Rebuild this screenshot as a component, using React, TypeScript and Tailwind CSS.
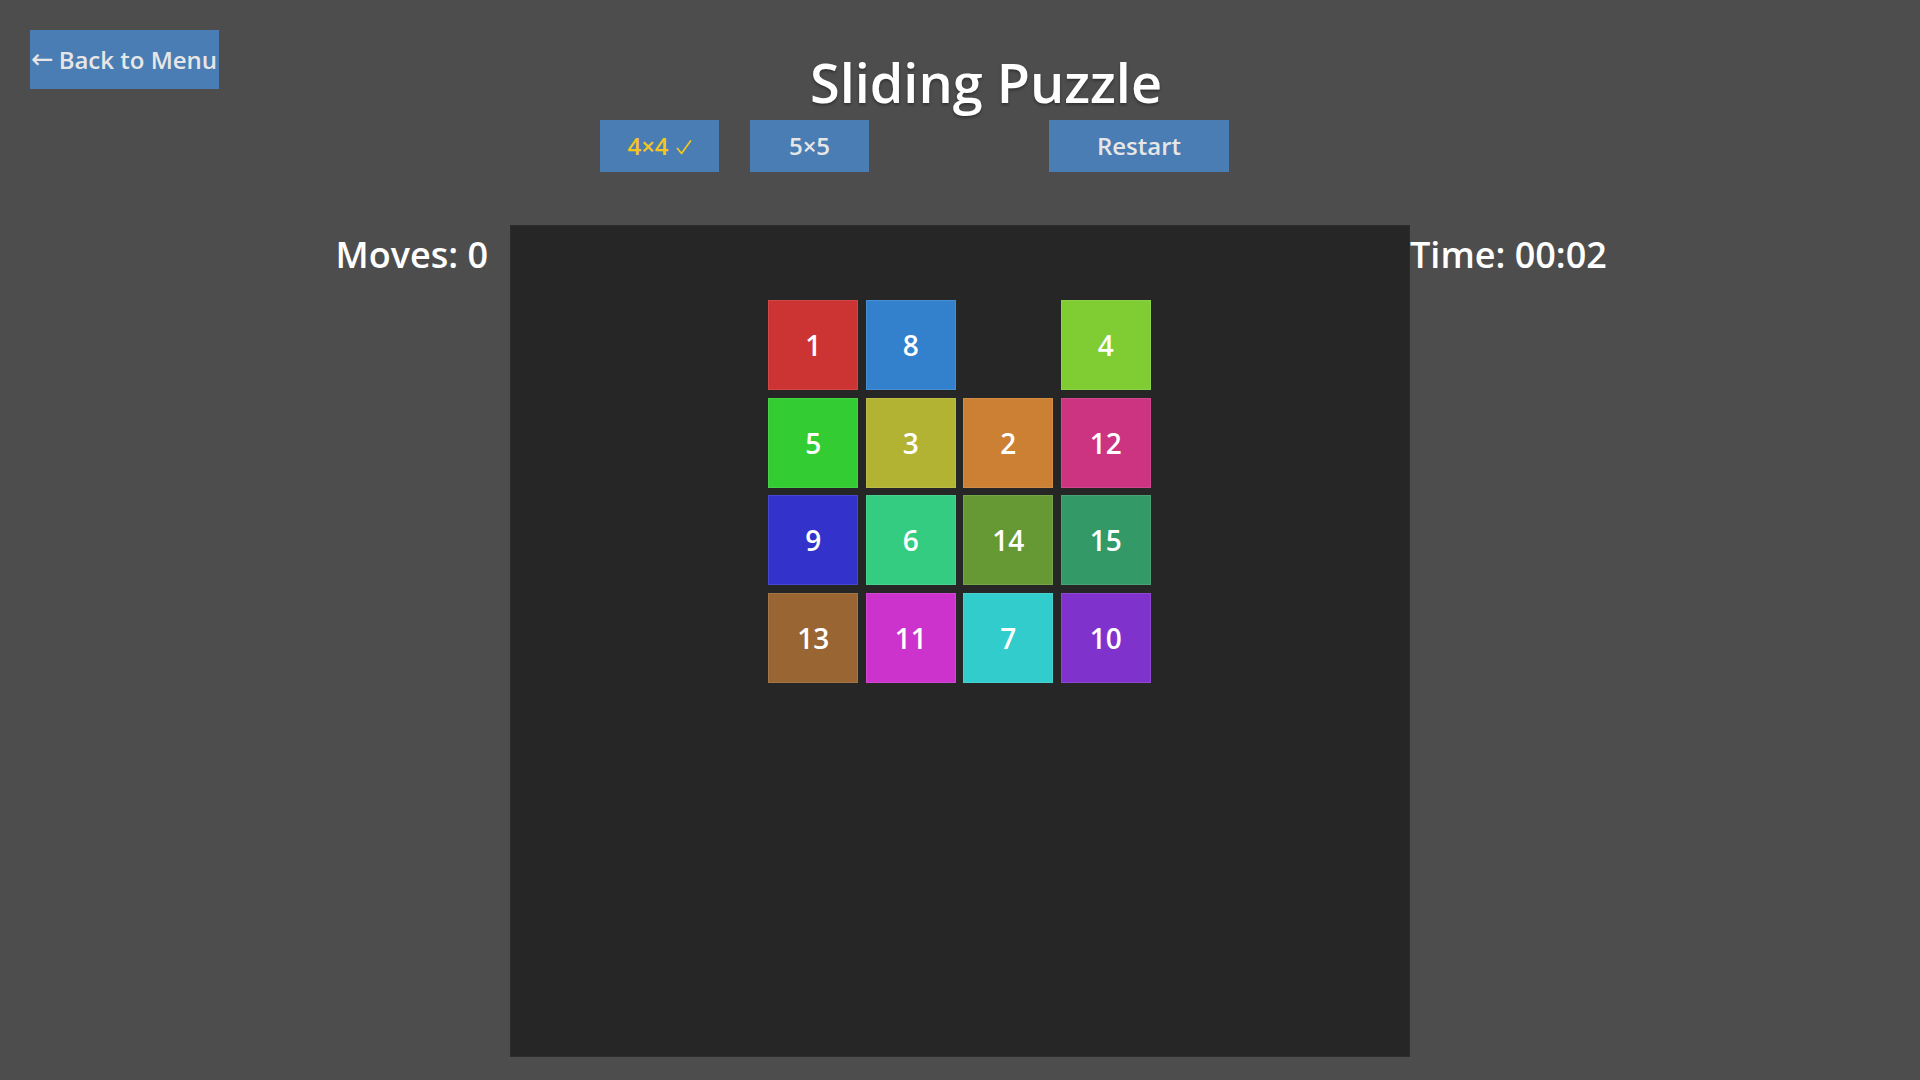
import React from "react";

const tiles: (null | { n: number; c: string })[] = [
  { n: 1, c: "bg-[#cc3333]" },
  { n: 8, c: "bg-[#3380cc]" },
  null,
  { n: 4, c: "bg-[#80cc33]" },
  { n: 5, c: "bg-[#33cc33]" },
  { n: 3, c: "bg-[#b3b333]" },
  { n: 2, c: "bg-[#cc8033]" },
  { n: 12, c: "bg-[#cc3380]" },
  { n: 9, c: "bg-[#3333cc]" },
  { n: 6, c: "bg-[#33cc80]" },
  { n: 14, c: "bg-[#669933]" },
  { n: 15, c: "bg-[#339966]" },
  { n: 13, c: "bg-[#996633]" },
  { n: 11, c: "bg-[#cc33cc]" },
  { n: 7, c: "bg-[#33cccc]" },
  { n: 10, c: "bg-[#8033cc]" },
];

export default function App() {
  return (
    <div className="w-[1920px] h-[1080px] overflow-hidden bg-[#4d4d4d] font-['Open_Sans',sans-serif] font-semibold">
      <div className="grid">
        <div className="col-start-1 row-start-1 pl-[30px] pt-[30px]">
          <button className="w-[189px] h-[59px] bg-[#4a7db4] text-[#e6e6e6] text-[24px] leading-none flex items-center justify-start pl-[1px] whitespace-nowrap">
            <span className="font-['DejaVu_Sans',sans-serif] font-normal text-[27px] mr-[5px] -mt-[3px]">←</span>
            Back to Menu
          </button>
        </div>
        <div className="col-start-1 row-start-1 flex flex-col">
          <div className="flex justify-center pl-[52px] pt-[55px]">
            <h1 className="text-[54px] leading-none text-white [text-shadow:0_2px_3px_rgba(0,0,0,0.35)]">
              Sliding Puzzle
            </h1>
          </div>
          <div className="flex pl-[600px] mt-[11px]">
            <button className="w-[119px] h-[52px] bg-[#4a7db4] text-[#f5c61f] text-[24px] leading-none flex items-center justify-center">
              4×4
              <svg className="ml-[7px] mt-[2px]" width="16" height="15" viewBox="0 0 16 15" fill="none">
                <path d="M1.5 8.5 L5.5 13.5 L14.5 1" stroke="#f5c61f" strokeWidth="1.7" strokeLinecap="round" strokeLinejoin="round" />
              </svg>
            </button>
            <button className="ml-[31px] w-[119px] h-[52px] bg-[#4a7db4] text-[#e6e6e6] text-[24px] leading-none flex items-center justify-center">
              5×5
            </button>
            <button className="ml-[180px] w-[180px] h-[52px] bg-[#4a7db4] text-[#e6e6e6] text-[24px] leading-none flex items-center justify-center">
              Restart
            </button>
          </div>
        </div>
      </div>

      <div className="flex items-start mt-[53px]">
        <div className="w-[510px] flex justify-end pr-[22px] pt-[12px]">
          <span className="text-[36px] leading-none text-white whitespace-nowrap">Moves: 0</span>
        </div>
        <div className="w-[900px] h-[832px] bg-[#262626] border border-[#2c2c2c] flex justify-center pt-[74px] pr-[1px]">
          <div className="grid grid-cols-[repeat(4,90px)] auto-rows-[90px] gap-[7.5px] h-fit">
            {tiles.map((t, i) =>
              t ? (
                <div
                  key={i}
                  className={`${t.c} flex items-center justify-center text-white text-[28px] leading-none border border-white/10`}
                >
                  {t.n}
                </div>
              ) : (
                <div key={i} />
              )
            )}
          </div>
        </div>
        <div className="pt-[12px]">
          <span className="text-[36px] leading-none text-white whitespace-nowrap">Time: 00:02</span>
        </div>
      </div>
    </div>
  );
}
